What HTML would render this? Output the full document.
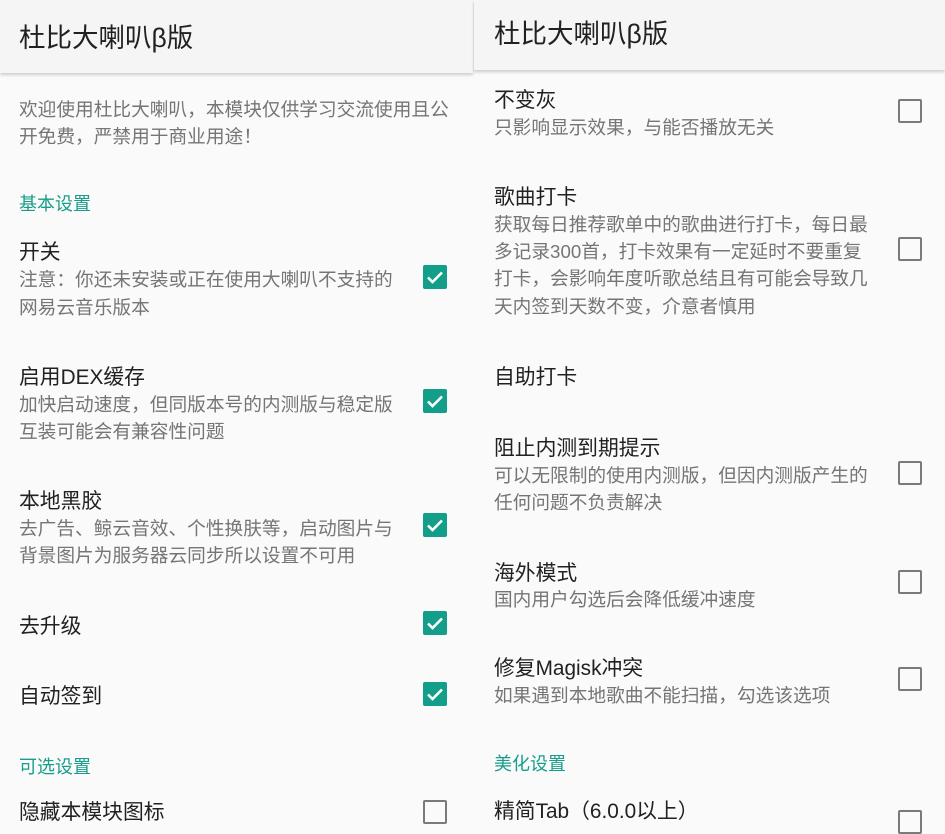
<!DOCTYPE html>
<html><head><meta charset="utf-8">
<style>
*{margin:0;padding:0;box-sizing:border-box}
body{width:945px;height:817px;overflow:hidden;background:#fafafa;position:relative;font-family:"Liberation Sans","Noto Sans CJK SC",sans-serif}
.hd{position:absolute;top:0;background:#f5f5f5;box-shadow:0 2px 3px rgba(0,0,0,0.18)}
.x{position:absolute;white-space:nowrap;line-height:28px;margin-top:2px}
.h{font-size:26.5px;color:#212121;line-height:36px;margin-top:1px}
.t{font-size:20.8px;color:#212121}
.s{font-size:18.7px;color:#757575}
.c{font-size:18px;color:#179e8a}
.cb{position:absolute;width:24px;height:24px;border-radius:2px;background:#139e8a}
.cb svg{position:absolute;left:0;top:0}
.ub{position:absolute;width:24px;height:24px;border:2.5px solid #7a7a7a;border-radius:2px}
</style></head><body>
<div class="hd" style="left:0;width:473px;height:73px"></div>
<div class="hd" style="left:474px;width:471px;height:70px"></div>
<div class="x h" style="left:19px;top:19px">杜比大喇叭β版</div>
<div class="x h" style="left:494px;top:15px">杜比大喇叭β版</div>

<!-- left -->
<div class="x s" style="left:19px;top:94px">欢迎使用杜比大喇叭，本模块仅供学习交流使用且公</div>
<div class="x s" style="left:19px;top:121px">开免费，严禁用于商业用途！</div>
<div class="x c" style="left:19px;top:188px">基本设置</div>
<div class="x t" style="left:19px;top:237px">开关</div>
<div class="x s" style="left:19px;top:264px">注意：你还未安装或正在使用大喇叭不支持的</div>
<div class="x s" style="left:19px;top:292px">网易云音乐版本</div>
<div class="x t" style="left:19px;top:362px">启用DEX缓存</div>
<div class="x s" style="left:19px;top:389px">加快启动速度，但同版本号的内测版与稳定版</div>
<div class="x s" style="left:19px;top:416px">互装可能会有兼容性问题</div>
<div class="x t" style="left:19px;top:486px">本地黑胶</div>
<div class="x s" style="left:19px;top:513px">去广告、鲸云音效、个性换肤等，启动图片与</div>
<div class="x s" style="left:19px;top:540px">背景图片为服务器云同步所以设置不可用</div>
<div class="x t" style="left:19px;top:611px">去升级</div>
<div class="x t" style="left:19px;top:681px">自动签到</div>
<div class="x c" style="left:19px;top:751px">可选设置</div>
<div class="x t" style="left:19px;top:797px">隐藏本模块图标</div>

<!-- right -->
<div class="x t" style="left:494px;top:85px">不变灰</div>
<div class="x s" style="left:494px;top:112px">只影响显示效果，与能否播放无关</div>
<div class="x t" style="left:494px;top:182px">歌曲打卡</div>
<div class="x s" style="left:494px;top:209px">获取每日推荐歌单中的歌曲进行打卡，每日最</div>
<div class="x s" style="left:494px;top:236px">多记录300首，打卡效果有一定延时不要重复</div>
<div class="x s" style="left:494px;top:263px">打卡，会影响年度听歌总结且有可能会导致几</div>
<div class="x s" style="left:494px;top:291px">天内签到天数不变，介意者慎用</div>
<div class="x t" style="left:494px;top:362px">自助打卡</div>
<div class="x t" style="left:494px;top:433px">阻止内测到期提示</div>
<div class="x s" style="left:494px;top:460px">可以无限制的使用内测版，但因内测版产生的</div>
<div class="x s" style="left:494px;top:487px">任何问题不负责解决</div>
<div class="x t" style="left:494px;top:558px">海外模式</div>
<div class="x s" style="left:494px;top:584px">国内用户勾选后会降低缓冲速度</div>
<div class="x t" style="left:494px;top:653px">修复Magisk冲突</div>
<div class="x s" style="left:494px;top:680px">如果遇到本地歌曲不能扫描，勾选该选项</div>
<div class="x c" style="left:494px;top:748px">美化设置</div>
<div class="x t" style="left:494px;top:796px">精简Tab（6.0.0以上）</div>

<!-- checkboxes -->
<div class="cb" style="left:423px;top:265px"><svg width="24" height="24" viewBox="0 0 24 24"><path d="M5 12.5l4.5 4.5L19 7.5" fill="none" stroke="#fff" stroke-width="2.6"/></svg></div>
<div class="cb" style="left:423px;top:389px"><svg width="24" height="24" viewBox="0 0 24 24"><path d="M5 12.5l4.5 4.5L19 7.5" fill="none" stroke="#fff" stroke-width="2.6"/></svg></div>
<div class="cb" style="left:423px;top:513px"><svg width="24" height="24" viewBox="0 0 24 24"><path d="M5 12.5l4.5 4.5L19 7.5" fill="none" stroke="#fff" stroke-width="2.6"/></svg></div>
<div class="cb" style="left:423px;top:611px"><svg width="24" height="24" viewBox="0 0 24 24"><path d="M5 12.5l4.5 4.5L19 7.5" fill="none" stroke="#fff" stroke-width="2.6"/></svg></div>
<div class="cb" style="left:423px;top:682px"><svg width="24" height="24" viewBox="0 0 24 24"><path d="M5 12.5l4.5 4.5L19 7.5" fill="none" stroke="#fff" stroke-width="2.6"/></svg></div>
<div class="ub" style="left:423px;top:800px"></div>

<div class="ub" style="left:898px;top:99px"></div>
<div class="ub" style="left:898px;top:237px"></div>
<div class="ub" style="left:898px;top:461px"></div>
<div class="ub" style="left:898px;top:570px"></div>
<div class="ub" style="left:898px;top:667px"></div>
<div class="ub" style="left:898px;top:810px"></div>
</body></html>
